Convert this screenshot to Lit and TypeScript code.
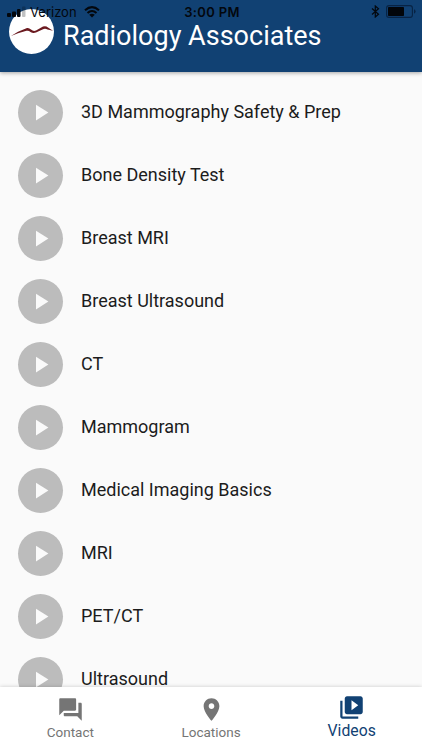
import { LitElement, html, css, svg } from "lit";
import { customElement, property } from "lit/decorators.js";

const VIDEOS = [
  "3D Mammography Safety & Prep",
  "Bone Density Test",
  "Breast MRI",
  "Breast Ultrasound",
  "CT",
  "Mammogram",
  "Medical Imaging Basics",
  "MRI",
  "PET/CT",
  "Ultrasound",
];

const ICONS = {
  forum: "M21 6h-2v9H6v2c0 .55.45 1 1 1h11l4 4V7c0-.55-.45-1-1-1zm-4 6V3c0-.55-.45-1-1-1H3c-.55 0-1 .45-1 1v14l4-4h10c.55 0 1-.45 1-1z",
  place: "M12 2C8.13 2 5 5.13 5 9c0 5.25 7 13 7 13s7-7.75 7-13c0-3.87-3.13-7-7-7zm0 9.5c-1.38 0-2.5-1.12-2.5-2.5s1.12-2.5 2.5-2.5 2.5 1.12 2.5 2.5-1.12 2.5-2.5 2.5z",
  library: "M4 6H2v14c0 1.1.9 2 2 2h14v-2H4V6zm16-4H8c-1.1 0-2 .9-2 2v12c0 1.1.9 2 2 2h12c1.1 0 2-.9 2-2V4c0-1.1-.9-2-2-2zm-8 12.5v-9l6 4.5-6 4.5z",
  play: "M8 5v14l11-7z",
};

@customElement("status-bar")
export class StatusBar extends LitElement {
  static styles = css`
    :host {
      display: grid;
      grid-template-columns: 1fr auto 1fr;
      align-items: center;
      height: 24px;
      padding: 0 6px 0 7px;
      font: 13px/24px Inter, "Liberation Sans", sans-serif;
      color: #03070d;
    }
    .side { display: flex; align-items: center; }
    .end { justify-content: flex-end; gap: 6px; padding-bottom: 2px; }
    .carrier { margin: 0 7px 0 4px; }
    .time { font-weight: 600; letter-spacing: 0.35px; padding-left: 1px; }
    svg { display: block; }
  `;
  render() {
    return html`
      <div class="side">
        <svg width="19" height="12" viewBox="0 0 19 12" fill="#03070d">
          <rect x="0" y="7" width="4" height="4" rx="1" />
          <rect x="5" y="5.5" width="4" height="5.5" rx="1" />
          <rect x="10" y="3" width="3.5" height="8" rx="1" />
          <rect x="15" y="0.5" width="3.5" height="10.5" rx="1" opacity="0.25" />
        </svg>
        <span class="carrier">Verizon</span>
        <svg width="16" height="12" viewBox="0 0 16 12" fill="none" stroke="#03070d" stroke-width="2.1">
          <path d="M1 4.3Q8-2 15 4.3M3.5 7Q8 3 12.5 7" />
          <path d="M8 11.5L5.2 8.8Q8 6.6 10.8 8.8z" fill="#03070d" stroke="none" />
        </svg>
      </div>
      <span class="time">3:00 PM</span>
      <div class="side end">
        <svg width="9" height="13" viewBox="0 0 9 13" fill="none" stroke="#03070d" stroke-width="1.2">
          <path d="M1 3.5L7.5 9.3L4.3 12V1L7.5 3.7L1 9.5" />
        </svg>
        <svg width="30" height="13" viewBox="0 0 30 13">
          <rect x="0.6" y="0.6" width="25.8" height="11.8" rx="2.5" fill="none" stroke="#082344" stroke-width="1.1" />
          <rect x="2" y="2" width="16" height="9" rx="0.8" fill="#02050a" />
          <path d="M28 4.3q1.6.6 1.6 2.2t-1.6 2.2z" fill="#082344" />
        </svg>
      </div>
    `;
  }
}

@customElement("video-row")
export class VideoRow extends LitElement {
  @property() label = "";
  static styles = css`
    :host {
      display: flex;
      align-items: center;
      gap: 18px;
      height: 63px;
      padding: 0 18px;
      font-size: 18px;
      color: #1c1c1c;
    }
    .disc {
      display: grid;
      place-items: center;
      width: 45px;
      height: 45px;
      border-radius: 50%;
      background: #bcbcbc;
    }
    .label { padding-bottom: 2px; }
  `;
  render() {
    return html`
      <div class="disc">
        <svg width="27" height="27" viewBox="0 0 24 24" fill="#fafafa"><path d=${ICONS.play} /></svg>
      </div>
      <span class="label">${this.label}</span>
    `;
  }
}

@customElement("nav-tab")
export class NavTab extends LitElement {
  @property() label = "";
  @property() icon: keyof typeof ICONS = "forum";
  @property({ type: Boolean, reflect: true }) active = false;
  static styles = css`
    :host {
      display: flex;
      flex-direction: column;
      align-items: center;
      flex: 1;
      padding-top: 9px;
      font-size: 13.5px;
      line-height: 18px;
      color: #757575;
    }
    :host([active]) {
      padding-top: 7px;
      font-size: 15.75px;
      line-height: 20px;
      color: #114173;
    }
    svg { display: block; fill: currentColor; }
  `;
  render() {
    return html`
      <svg width="27" height="27" viewBox="0 0 24 24"><path d=${ICONS[this.icon]} /></svg>
      <span>${this.label}</span>
    `;
  }
}

@customElement("app-root")
export class AppRoot extends LitElement {
  static styles = css`
    :host {
      display: flex;
      flex-direction: column;
      height: 100vh;
      overflow: hidden;
      background: #fafafa;
      font-family: Roboto, "Liberation Sans", sans-serif;
    }
    .header {
      position: relative;
      z-index: 1;
      display: flex;
      align-items: center;
      gap: 9px;
      flex: none;
      box-sizing: border-box;
      height: 72px;
      padding: 0 9px 9px;
      background: #114173;
      box-shadow: 0 1px 4px rgba(0, 0, 0, 0.35);
    }
    .logo { display: block; flex: none; }
    .title {
      margin: 9px 0 0;
      font-size: 27px;
      line-height: 36px;
      font-weight: 400;
      color: #fff;
      white-space: nowrap;
    }
    status-bar { position: absolute; inset: 0 0 auto; }
    .list { flex: 1; min-height: 0; overflow: hidden; padding-top: 9px; }
    .tabs {
      position: relative;
      z-index: 1;
      display: flex;
      flex: none;
      height: 63px;
      background: #fff;
      box-shadow: 0 0 4px rgba(0, 0, 0, 0.2);
    }
  `;
  render() {
    return html`
      <header class="header">
        <svg class="logo" width="45" height="45" viewBox="0 0 45 45">
          <circle cx="22.5" cy="22.5" r="22.5" fill="#fff" />
          ${svg`<path d="M2 27L9 22.8L18 19Q20 18.5 22 20.5Q24.5 22.8 27 21.5L34 17.5Q37 16.5 39 18.5L44 21.8L38.5 20.5Q36 19 33.5 20.5L27 23.5Q24 24.5 21.5 23Q19.5 21.2 17.5 21.8L9 24.2z" fill="#6b1a20" />`}
        </svg>
        <h1 class="title">Radiology Associates</h1>
        <status-bar></status-bar>
      </header>
      <main class="list">
        ${VIDEOS.map((v) => html`<video-row .label=${v}></video-row>`)}
      </main>
      <nav class="tabs">
        <nav-tab label="Contact" icon="forum"></nav-tab>
        <nav-tab label="Locations" icon="place"></nav-tab>
        <nav-tab label="Videos" icon="library" active></nav-tab>
      </nav>
    `;
  }
}
